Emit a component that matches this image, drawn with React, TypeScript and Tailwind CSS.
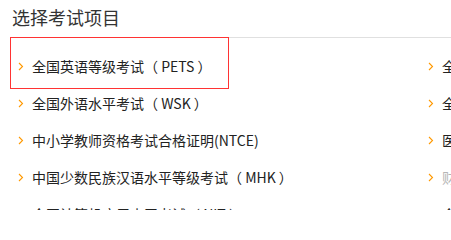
const leftExams = [
  "全国英语等级考试（ PETS ）",
  "全国外语水平考试（ WSK ）",
  "中小学教师资格考试合格证明(NTCE)",
  "中国少数民族汉语水平等级考试（ MHK ）",
  "全国计算机应用水平考试（ NIT ）",
];

const rightExams = [
  { name: "全国计算机等级考试（ NCRE ）" },
  { name: "全国翻译专业资格（水平）考试" },
  { name: "医师资格考试" },
  { name: "财经类专业资格考试", muted: true },
  { name: "全国专业技术人员职业资格考试" },
];

function Chevron() {
  return (
    <svg width="6" height="9" viewBox="0 0 6 9" className="shrink-0">
      <polyline points="1,1 4.5,4.5 1,8" fill="none" stroke="#ff9900" strokeWidth="1.1" />
    </svg>
  );
}

function ExamItem({ name, muted }: { name: string; muted?: boolean }) {
  return (
    <li className="flex h-[37px] items-center whitespace-nowrap pl-[8px]">
      <Chevron />
      <span className={`ml-[8px] text-[14px] ${muted ? "text-[#b5b5b5]" : "text-[#222]"}`}>{name}</span>
    </li>
  );
}

export default function App() {
  return (
    <div
      className="relative h-[210px] w-[451px] overflow-hidden bg-white pl-[10px]"
      style={{ fontFamily: '"Noto Sans CJK SC", "Noto Sans", sans-serif' }}
    >
      <div className="flex h-[38px] items-center border-b border-[#e0e0e0] pb-[3px] pl-[2px]">
        <h1 className="text-[18px] font-normal leading-none text-[#333]">选择考试项目</h1>
      </div>

      <div className="grid grid-cols-[410px_410px] pt-[10px]">
        <ul>
          {leftExams.map((name) => (
            <ExamItem key={name} name={name} />
          ))}
        </ul>
        <ul>
          {rightExams.map((exam) => (
            <ExamItem key={exam.name} name={exam.name} muted={exam.muted} />
          ))}
        </ul>
      </div>

      {/* highlight around the selected exam */}
      <div className="absolute left-[10px] top-[37px] h-[52px] w-[219px] border border-[#f33]" />
    </div>
  );
}
